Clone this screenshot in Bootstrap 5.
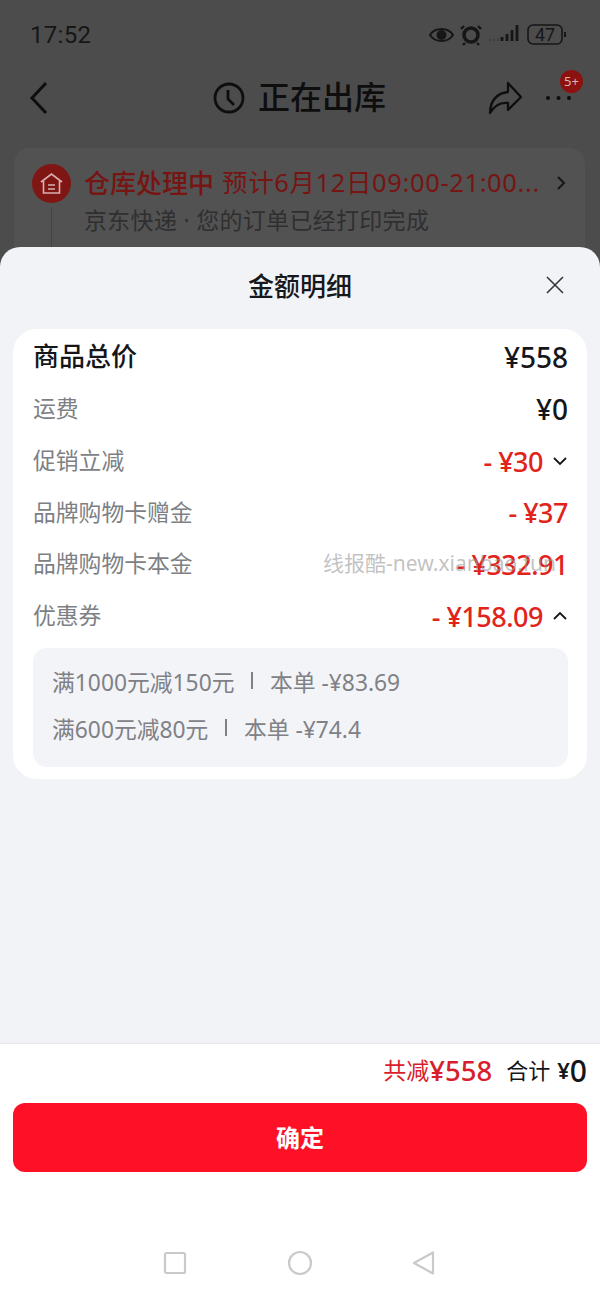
<!DOCTYPE html>
<html lang="zh-CN">
<head>
    <meta charset="UTF-8">
    <meta name="viewport" content="width=device-width, initial-scale=1.0">
    <title>金额明细</title>
    <link href="https://cdn.jsdelivr.net/npm/bootstrap@5.3.0/dist/css/bootstrap.min.css" rel="stylesheet">
    <style>
        /* General */
        html, body { height: 100%; }
        body {
            width: 600px;
            height: 1295px;
            overflow: hidden;
            background: #4c4c4d;
            font-family: "Noto Sans", "Noto Sans CJK SC", sans-serif;
            color: #15161a;
        }

        /* Dimmed page behind the sheet */
        .behind { height: 247px; overflow: hidden; }
        .status-row { height: 68px; padding: 2px 30px 0 30px; color: #161617; }
        .status-time { font-size: 24px; font-family: Roboto, sans-serif; letter-spacing: .3px; }
        .title-row { height: 60px; padding: 0 28px 0 27px; margin-bottom: 20px; }
        .title-back { margin-right: 162px; }
        .title-text { font-size: 32px; font-weight: 500; color: #0e0e0f; line-height: 1; margin-left: 13px; margin-top: -3px; }
        .title-right { margin-left: auto; }
        .share-icon { margin-right: 23px; }
        .more-wrap { width: 27px; height: 30px; }
        .more-badge {
            top: -13px; right: -11px; width: 23px; height: 23px;
            background: #8c1210; color: #d9b4b3; font-size: 13px; line-height: 23px;
            border-radius: 50%; text-align: center;
        }
        .order-box {
            margin: 0 15px 0 14px; height: 120px; background: #525253;
            border-radius: 16px 16px 0 0; padding: 16px 18px;
        }
        .order-dot {
            width: 39px; height: 39px; border-radius: 50%; background: #7f1613;
            flex: none;
        }
        .order-line { width: 1px; height: 40px; background: #6b3230; margin: 4px 0 0 19px; }
        .order-body { min-width: 0; padding: 6px 0 0 13px; }
        .order-red { color: #761512; white-space: nowrap; line-height: 1; }
        .order-main { font-size: 26px; font-weight: 500; }
        .order-sub { font-size: 25.500px; margin-left: 8px; letter-spacing: .62px; }
        .order-grey { color: #2f2f30; font-size: 23px; line-height: 1; margin-top: 13px; letter-spacing: .3px; }

        /* Sheet */
        .sheet {
            height: 796px; background: #f2f3f7;
            border-radius: 20px 20px 0 0; padding: 0 13px;
        }
        .sheet-head { height: 82px; }
        .sheet-title { font-size: 26px; font-weight: 500; color: #17181c; line-height: 1; margin-top: -4px; }
        .sheet-close { right: 35px; top: 28px; }
        .amount-card {
            background: #fff; border-radius: 24px; height: 450px;
            padding: 3px 19px 0 20px;
        }
        .amount-row { height: 51.7px; }
        .amount-label { font-size: 22.800px; color: #7d7f84; line-height: 1; margin-top: 0; }
        .amount-label.strong { font-size: 26px; font-weight: 500; color: #15161a; margin-top: -3px; }
        .amount-val { font-size: 28px; font-weight: 500; line-height: 1; white-space: nowrap; margin-top: -2px; }
        .val-red { color: #e2231a; font-size: 27px; letter-spacing: -.5px; margin-top: 0; }
        .arrow-slot { margin-left: 9px; }
        .coupon-box {
            background: #f3f4f8; border-radius: 14px; height: 119px;
            padding: 11px 20px 0 19px; margin-top: 6px;
            color: #7f8186; font-size: 22.800px;
        }
        .coupon-line { height: 47px; white-space: nowrap; }
        .coupon-sep { width: 1.500px; height: 17px; background: #7f8186; margin: -4px 17px 0 17px; }
        .watermark {
            left: 323px; top: 553px; color: rgba(150, 150, 150, .58);
            font-size: 21px; line-height: 1; white-space: nowrap;
        }

        /* Footer */
        .bottom-part {
            height: 252px; background: #fff; border-top: 1px solid #e6e6e8;
            padding: 0 13px;
        }
        .total-row { height: 59px; padding: 0 0 6px 0; }
        .saved-label { font-size: 23px; color: #d81e2c; }
        .saved-val { font-size: 27.500px; font-weight: 500; color: #d81e2c; margin-right: 14px; }
        .total-label { font-size: 22px; color: #15161a; margin-right: 7px; }
        .total-yen { font-size: 22px; font-weight: 600; }
        .total-val { font-size: 30px; font-weight: 500; }
        .btn-confirm {
            width: 100%; height: 69px; border: 0; border-radius: 12px;
            background: #fe1126; color: #fff; font-size: 24px; font-weight: 600;
        }
        .btn-confirm:hover { background: #fe1126; color: #fff; }
        .nav-keys { padding: 78px 151px 0 150px; }
    </style>
</head>

<body class="position-relative">

<!-- Dimmed order page -->
<div class="behind position-relative">
    <div class="status-row d-flex align-items-center justify-content-between">
        <span class="status-time">17:52</span>
        <svg width="142" height="24" viewBox="0 0 142 24" fill="none" stroke="#161617">
            <path d="M2 12c5-8 18-8 23 0-5 8-18 8-23 0z" stroke-width="2"/>
            <circle cx="13.500" cy="12" r="5" fill="#161617" stroke="none"/>
            <circle cx="43" cy="12" r="7" stroke-width="3.500"/>
            <path d="M36 3l-3 3M50 3l3 3M37 20l-2 2M49 20l2 2" stroke-width="2.400"/>
            <path d="M62 16v2M66 16v2M70 15v3" stroke="#3b3b3c" stroke-width="1.500"/>
            <path d="M74 14v4M79 11v7M84 7v11M89 2v16" stroke-width="2.800"/>
            <rect x="100" y="2" width="34" height="19" rx="5" stroke-width="1.600"/>
            <path d="M137 9v5" stroke-width="2"/>
            <text x="117" y="18" font-size="18" fill="#161617" stroke="none" text-anchor="middle" font-family="Roboto, sans-serif">47</text>
        </svg>
    </div>
    <div class="title-row d-flex align-items-center">
        <svg class="title-back" width="24" height="36" viewBox="0 0 24 36" fill="none" stroke="#0e0e0f" stroke-width="3">
            <path d="M19 3L5 18l14 15"/>
        </svg>
        <svg width="32" height="32" viewBox="0 0 32 32" fill="none" stroke="#0e0e0f" stroke-width="2.800">
            <circle cx="16" cy="16" r="14"/>
            <path d="M15 8v9l6 6"/>
        </svg>
        <span class="title-text">正在出库</span>
        <div class="title-right d-flex align-items-center">
            <svg class="share-icon" width="34" height="34" viewBox="0 0 34 34" fill="none" stroke="#0e0e0f" stroke-width="2.300">
                <path d="M20 2l13 14-13 13v-7C11 21 6 25 2 32c0-12 7-20 18-21z" stroke-linejoin="round"/>
            </svg>
            <div class="more-wrap position-relative d-flex align-items-center justify-content-center">
                <svg width="27" height="6" viewBox="0 0 27 6" fill="#0e0e0f">
                    <circle cx="3" cy="3" r="2"/><circle cx="13.500" cy="3" r="2"/><circle cx="24" cy="3" r="2"/>
                </svg>
                <span class="more-badge position-absolute">5+</span>
            </div>
        </div>
    </div>
    <div class="order-box d-flex">
        <div>
            <div class="order-dot d-flex align-items-center justify-content-center">
                <svg width="25" height="25" viewBox="0 0 25 25" fill="none" stroke="#d8b0ae" stroke-width="1.600">
                    <path d="M2 11L12.500 3 23 11M4.500 10v12h16V10M9 14h7M9 18h7"/>
                </svg>
            </div>
            <div class="order-line"></div>
        </div>
        <div class="order-body flex-grow-1">
            <div class="d-flex align-items-center order-red">
                <span class="order-main">仓库处理中</span>
                <span class="order-sub">预计6月12日09:00-21:00...</span>
                <svg class="ms-auto" width="12" height="16" viewBox="0 0 12 16" fill="none" stroke="#161617" stroke-width="2"><path d="M3 2l6 6-6 6"/></svg>
            </div>
            <div class="order-grey">京东快递 · 您的订单已经打印完成</div>
        </div>
    </div>
</div>

<!-- Amount sheet -->
<div class="sheet position-relative">
    <div class="sheet-head d-flex align-items-center justify-content-center">
        <span class="sheet-title">金额明细</span>
    </div>
    <svg class="sheet-close position-absolute" width="20" height="20" viewBox="0 0 20 20" stroke="#33353a" stroke-width="1.600">
        <path d="M2 2l16 16M18 2L2 18"/>
    </svg>

    <div class="amount-card">
        <div class="amount-row d-flex align-items-center justify-content-between">
            <span class="amount-label strong">商品总价</span>
            <span class="amount-val">¥558</span>
        </div>
        <div class="amount-row d-flex align-items-center justify-content-between">
            <span class="amount-label">运费</span>
            <span class="amount-val">¥0</span>
        </div>
        <div class="amount-row d-flex align-items-center justify-content-between">
            <span class="amount-label">促销立减</span>
            <span class="d-flex align-items-center">
                <span class="amount-val val-red">- ¥30</span>
                <svg class="arrow-slot" width="16" height="10" viewBox="0 0 16 10" fill="none" stroke="#15161a" stroke-width="1.800"><path d="M2 2l6 6 6-6"/></svg>
            </span>
        </div>
        <div class="amount-row d-flex align-items-center justify-content-between">
            <span class="amount-label">品牌购物卡赠金</span>
            <span class="amount-val val-red">- ¥37</span>
        </div>
        <div class="amount-row d-flex align-items-center justify-content-between">
            <span class="amount-label">品牌购物卡本金</span>
            <span class="amount-val val-red">- ¥332.91</span>
        </div>
        <div class="amount-row d-flex align-items-center justify-content-between">
            <span class="amount-label">优惠券</span>
            <span class="d-flex align-items-center">
                <span class="amount-val val-red">- ¥158.09</span>
                <svg class="arrow-slot" width="16" height="10" viewBox="0 0 16 10" fill="none" stroke="#15161a" stroke-width="1.800"><path d="M2 8l6-6 6 6"/></svg>
            </span>
        </div>
        <div class="coupon-box">
            <div class="coupon-line d-flex align-items-center">
                <span>满1000元减150元</span><span class="coupon-sep"></span><span>本单 -¥83.69</span>
            </div>
            <div class="coupon-line d-flex align-items-center">
                <span>满600元减80元</span><span class="coupon-sep"></span><span>本单 -¥74.4</span>
            </div>
        </div>
    </div>
</div>

<!-- Total and confirm -->
<div class="bottom-part">
    <div class="total-row d-flex align-items-center justify-content-end">
        <span class="saved-label">共减</span>
        <span class="saved-val">¥558</span>
        <span class="total-label">合计</span>
        <span class="total-yen">¥</span>
        <span class="total-val">0</span>
    </div>
    <button type="button" class="btn btn-confirm">确定</button>
    <div class="nav-keys d-flex align-items-center justify-content-between">
        <svg width="24" height="24" viewBox="0 0 24 24" fill="none" stroke="#c9c9c9" stroke-width="2.200"><rect x="2" y="2" width="20" height="20" rx="1.500"/></svg>
        <svg width="26" height="26" viewBox="0 0 26 26" fill="none" stroke="#c9c9c9" stroke-width="2.200"><circle cx="13" cy="13" r="11"/></svg>
        <svg width="24" height="26" viewBox="0 0 24 26" fill="none" stroke="#c9c9c9" stroke-width="2.200" stroke-linejoin="round"><path d="M21 2.500v21L2 13z"/></svg>
    </div>
</div>

<span class="watermark position-absolute">线报酷-new.xianbao.fun</span>

<script src="https://cdn.jsdelivr.net/npm/bootstrap@5.3.0/dist/js/bootstrap.bundle.min.js"></script>
</body>
</html>
